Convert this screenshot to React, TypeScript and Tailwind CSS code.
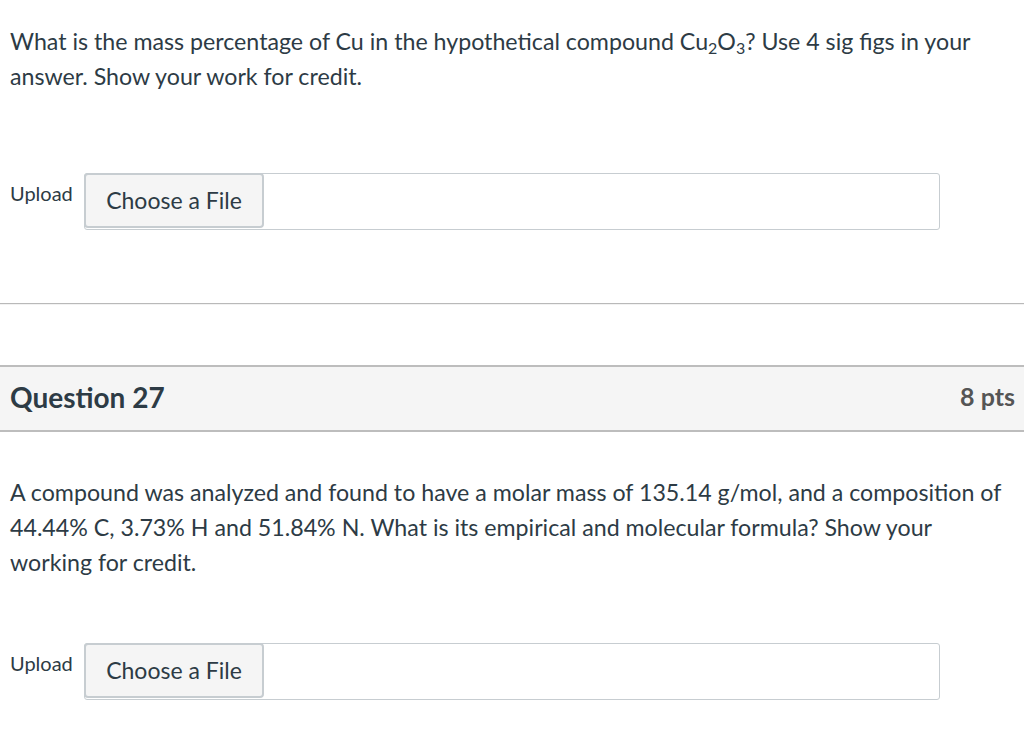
export default function App() {
  return (
    <div className="min-h-[752px] w-[1024px] overflow-hidden bg-white font-['Lato','Noto_Sans',sans-serif] text-[#2d3b45]">
      <div className="px-[10px] pt-[24px]">
        <p className="pr-[20px] text-[23.2px] leading-[35px]">
          What is the mass percentage of Cu in the hypothetical compound Cu
          <sub className="text-[16px] leading-none">2</sub>O<sub className="text-[16px] leading-none">3</sub>? Use 4 sig
          figs in your answer. Show your work for credit.
        </p>
        <UploadRow className="mt-[79px]" />
      </div>

      <div className="mt-[73px] h-[2px] border-t border-[#b9b9b9] bg-[#f2f2f2]" />

      <div className="mt-[60px] flex h-[67px] items-center justify-between border-y-2 border-[#bdbdbd] bg-[#f5f5f5] pl-[10px] pr-[9px]">
        <h2 className="-mt-[3px] text-[28px] font-bold text-[#2d3b45]">Question 27</h2>
        <span className="-mt-[3px] text-[25px] font-bold text-[#555555]">8 pts</span>
      </div>

      <div className="px-[10px] pt-[43px]">
        <p className="pr-[10px] text-[23.2px] leading-[35px]">
          A compound was analyzed and found to have a molar mass of 135.14 g/mol, and a composition of 44.44% C,
          3.73% H and 51.84% N. What is its empirical and molecular formula? Show your working for credit.
        </p>
        <UploadRow className="mt-[63px]" />
      </div>
    </div>
  );
}

function UploadRow({ className = '' }: { className?: string }) {
  return (
    <div className={`flex items-start ${className}`}>
      <span className="mt-[7px] w-[74px] text-[20px] leading-[26px]">Upload</span>
      <div className="flex h-[57px] w-[856px] rounded-[3px] border border-[#c7cdd1] bg-white">
        <button
          type="button"
          className="-m-px h-full w-[180px] rounded-[4px] border-2 border-[#c7cdd1] bg-[#f5f5f5] text-[23px] text-[#2d3b45]"
        >
          Choose a File
        </button>
      </div>
    </div>
  );
}
